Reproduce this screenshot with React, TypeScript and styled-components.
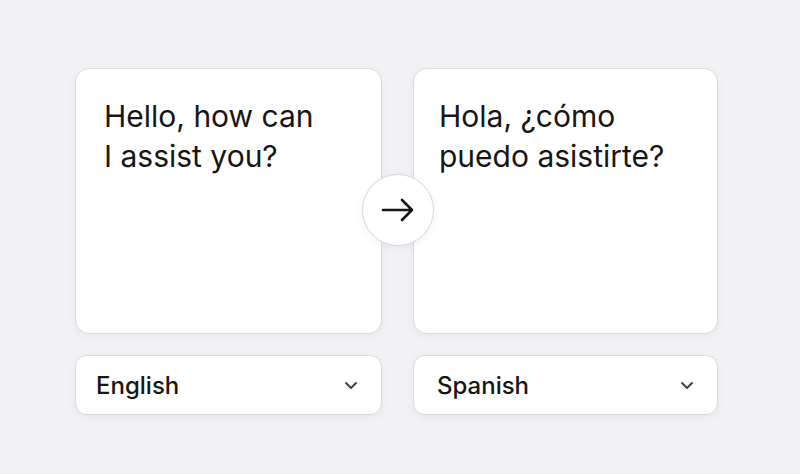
import React from "react";
import styled, { createGlobalStyle } from "styled-components";

const Global = createGlobalStyle`
  html, body { margin: 0; padding: 0; background: #f2f2f5; }
  body { font-family: Inter, "Noto Sans", sans-serif; color: #1a1a1a; }
`;

const Page = styled.div`
  width: 800px;
  height: 474px;
  box-sizing: border-box;
  padding: 68px 0 0 75px;
  background: #f2f2f5;
`;

const Grid = styled.div`
  position: relative;
  display: grid;
  grid-template-columns: 307px 305px;
  grid-template-rows: 266px 60px;
  column-gap: 31px;
  row-gap: 21px;
`;

const Card = styled.div<{ $inset: number }>`
  box-sizing: border-box;
  background: #ffffff;
  border: 1px solid #dcdce1;
  border-radius: 14px;
  box-shadow: 0 2px 8px rgba(30, 30, 60, 0.05);
  padding: 27px 20px 0 ${(p) => p.$inset}px;
  font-size: 30px;
  line-height: 40px;
  font-weight: 400;
  color: #161616;
`;

const Select = styled.div<{ $inset: number }>`
  box-sizing: border-box;
  background: #ffffff;
  border: 1px solid #dcdce1;
  border-radius: 12px;
  box-shadow: 0 2px 8px rgba(30, 30, 60, 0.05);
  display: flex;
  align-items: center;
  justify-content: space-between;
  padding: 0 23px 0 ${(p) => p.$inset}px;
  font-size: 24px;
  font-weight: 500;
  color: #161616;
`;

const SwapButton = styled.div`
  position: absolute;
  left: 287px;
  top: 106px;
  width: 72px;
  height: 72px;
  box-sizing: border-box;
  border-radius: 50%;
  background: #ffffff;
  border: 1px solid #d9d9de;
  box-shadow: 0 2px 8px rgba(30, 30, 60, 0.06);
  display: flex;
  align-items: center;
  justify-content: center;
`;

const Chevron = () => (
  <svg width="14" height="9" viewBox="0 0 14 9" fill="none">
    <path d="M2 2 L7 7 L12 2" stroke="#444" strokeWidth="2" strokeLinecap="round" strokeLinejoin="round" />
  </svg>
);

const Arrow = () => (
  <svg width="34" height="26" viewBox="0 0 34 26" fill="none">
    <path d="M2 13 H31 M21 3 L31 13 L21 23" stroke="#161616" strokeWidth="2.6" strokeLinecap="round" strokeLinejoin="round" />
  </svg>
);

export default function App() {
  return (
    <Page>
      <Global />
      <Grid>
        <Card $inset={28}>Hello, how can<br />I assist you?</Card>
        <Card $inset={25}>Hola, ¿cómo<br />puedo asistirte?</Card>
        <Select $inset={20}>
          <span>English</span>
          <Chevron />
        </Select>
        <Select $inset={23}>
          <span>Spanish</span>
          <Chevron />
        </Select>
        <SwapButton>
          <Arrow />
        </SwapButton>
      </Grid>
    </Page>
  );
}
